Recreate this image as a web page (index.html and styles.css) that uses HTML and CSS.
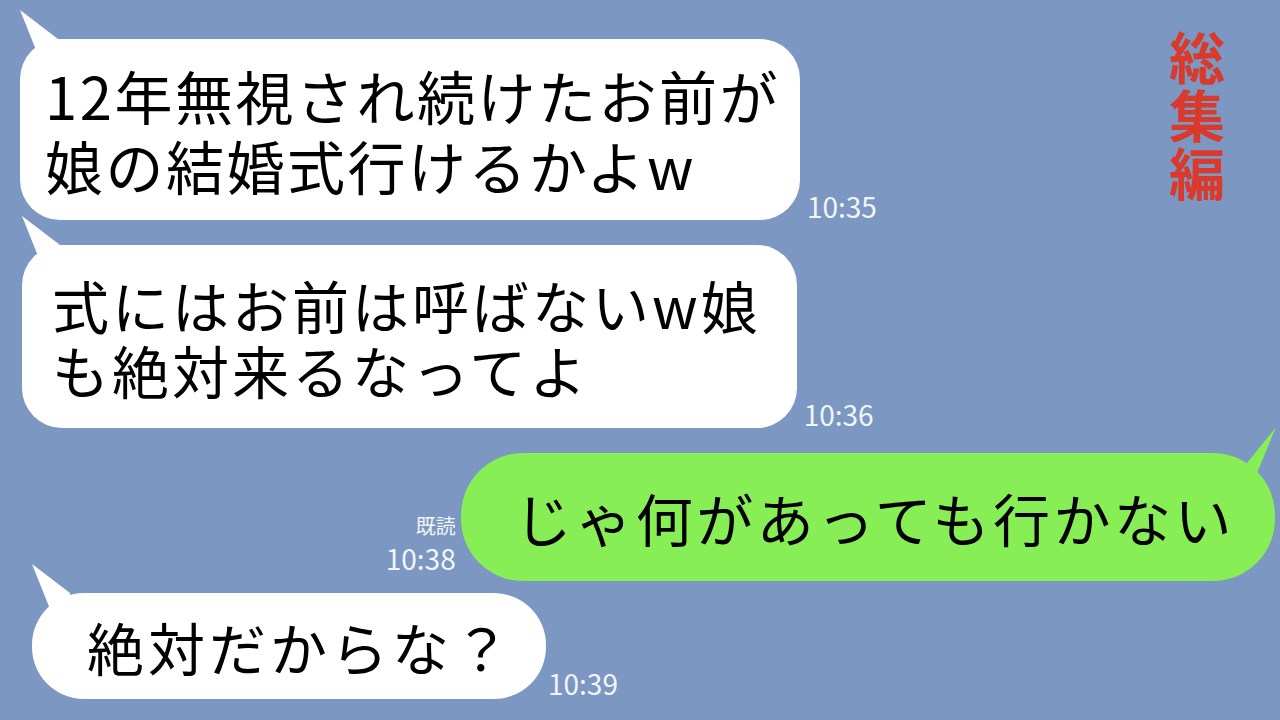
FILE: index.html
```html
<!DOCTYPE html>
<html lang="ja">
<head>
    <meta charset="UTF-8">
    <meta name="viewport" content="width=device-width, initial-scale=1.0">
    <title>トーク</title>
    <link rel="stylesheet" href="styles.css">
</head>
<body>
    <div class="chat">

        <div class="row row-1">
            <div class="bubble in b1">12年無視され続けたお前が<br>娘の結婚式行けるかよw</div>
            <div class="meta"><span class="time">10:35</span></div>
        </div>

        <div class="row row-2">
            <div class="bubble in b2">式にはお前は呼ばないw娘<br>も絶対来るなってよ</div>
            <div class="meta"><span class="time">10:36</span></div>
        </div>

        <div class="row row-3 mine">
            <div class="meta meta-out">
                <span class="read">既読</span>
                <span class="time">10:38</span>
            </div>
            <div class="bubble out b3">じゃ何があっても行かない</div>
        </div>

        <div class="row row-4">
            <div class="bubble in b4">絶対だからな？</div>
            <div class="meta meta-tight"><span class="time">10:39</span></div>
        </div>

    </div>

    <div class="title">総<br>集<br>編</div>
</body>
</html>
```

FILE: styles.css
```css
body {
    margin: 0;
    width: 1280px;
    height: 720px;
    overflow: hidden;
    position: relative;
    background-color: #7b97c2;
    font-family: "Noto Sans CJK JP", "Noto Sans", sans-serif;
}

.chat {
    display: flex;
    flex-direction: column;
    padding: 39px 5px 0 20px;
}

.row {
    display: flex;
    align-items: flex-end;
}

.row-2 {
    margin-top: 25px;
}

.row-3 {
    margin-top: 25px;
}

.row-4 {
    margin-top: 12px;
}

.mine {
    justify-content: flex-end;
}

.bubble {
    position: relative;
    color: #000;
    white-space: nowrap;
}

.bubble.in {
    background-color: #ffffff;
}

.bubble.in::before {
    content: "";
    position: absolute;
    left: 0;
    top: -29px;
    width: 45px;
    height: 50px;
    background-color: #ffffff;
    clip-path: polygon(0 0, 38px 29px, 40px 50px, 18px 45px);
}

.bubble.out {
    background-color: #87ee55;
}

.bubble.out::before {
    content: "";
    position: absolute;
    right: -1px;
    top: -26px;
    width: 45px;
    height: 50px;
    background-color: #87ee55;
    clip-path: polygon(100% 0, 20px 31px, 5px 50px, 26px 46px);
}

.b1 {
    font-size: 58px;
    line-height: 70px;
    letter-spacing: 2.5px;
    padding: 21px 20px 20px 25px;
    border-radius: 40px;
}

.b2 {
    margin-left: 2px;
    font-size: 57px;
    line-height: 65px;
    letter-spacing: 3px;
    padding: 27px 36px 26px 30px;
    border-radius: 40px;
}

.b3 {
    font-size: 57px;
    line-height: 128px;
    letter-spacing: 3.5px;
    padding: 0 40px 0 54px;
    border-radius: 62px;
}

.b4 {
    margin-left: 12px;
    font-size: 57px;
    line-height: 106px;
    letter-spacing: 4px;
    padding: 0 32px 0 55px;
    border-radius: 52px;
}

.b4::before {
    left: -11px;
    top: -26px;
    clip-path: polygon(0 0, 44px 26px, 40px 50px, 22px 45px);
}

.meta {
    display: flex;
    flex-direction: column;
    color: #f2f5fa;
    margin-left: 7px;
    margin-bottom: 0;
}

.meta-tight {
    margin-left: 2px;
    margin-bottom: 2px;
}

.time {
    font-size: 28px;
    line-height: 1;
}

.meta-out {
    align-items: flex-end;
    margin-left: 0;
    margin-right: 5px;
    margin-bottom: 9px;
}

.read {
    font-size: 20px;
    line-height: 1;
    margin-bottom: 8px;
}

.title {
    position: absolute;
    left: 1169px;
    top: 26px;
    font-size: 56px;
    font-weight: 700;
    line-height: 58px;
    color: #d93a2c;
}
```
